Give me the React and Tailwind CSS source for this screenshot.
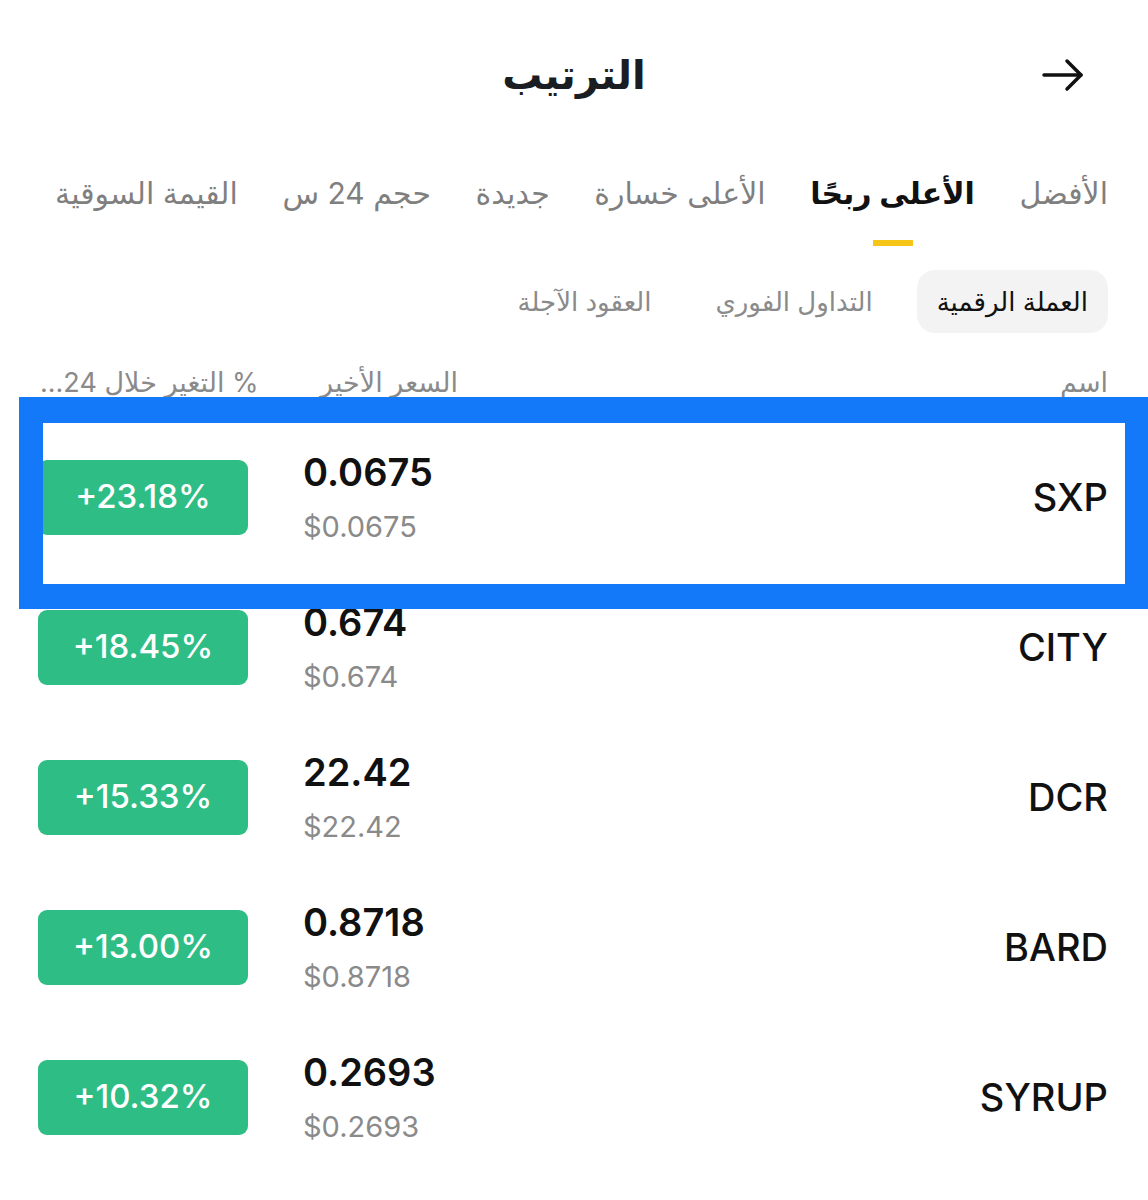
import React from "react";

const tabs = ["الأفضل", "الأعلى ربحًا", "الأعلى خسارة", "جديدة", "حجم 24 س", "القيمة السوقية"];
const markets = ["العملة الرقمية", "التداول الفوري", "العقود الآجلة"];

const rows = [
  { symbol: "SXP", price: "0.0675", usd: "$0.0675", change: "+23.18%" },
  { symbol: "CITY", price: "0.674", usd: "$0.674", change: "+18.45%" },
  { symbol: "DCR", price: "22.42", usd: "$22.42", change: "+15.33%" },
  { symbol: "BARD", price: "0.8718", usd: "$0.8718", change: "+13.00%" },
  { symbol: "SYRUP", price: "0.2693", usd: "$0.2693", change: "+10.32%" },
];

function BackArrow() {
  return (
    <svg width="42" height="34" viewBox="0 0 42 34" fill="none" stroke="#111" strokeWidth="3.5" strokeLinecap="round" strokeLinejoin="round">
      <path d="M2 17h37" />
      <path d="M25 3l14 14-14 14" />
    </svg>
  );
}

export default function App() {
  return (
    <div
      dir="rtl"
      className="relative w-[1148px] h-[1200px] bg-white overflow-hidden text-[#111]"
      style={{ fontFamily: "Inter, 'Noto Sans', 'DejaVu Sans', sans-serif" }}
    >
      {/* header */}
      <div className="grid grid-cols-[1fr_auto_1fr] items-center h-[150px] px-[40px]">
        <div className="flex justify-start pr-[24px]">
          <BackArrow />
        </div>
        <h1 className="text-[40px] font-bold leading-none text-[#1a1d21]">الترتيب</h1>
        <div />
      </div>

      {/* ranking tabs */}
      <div className="flex justify-between pr-[40px] pl-[55px] pt-[23px]">
        {tabs.map((t, i) => (
          <div key={t} className="flex flex-col items-center">
            <span
              className={`text-[30px] leading-[40px] whitespace-nowrap ${
                i === 1 ? "text-[#111] font-semibold" : "text-[#7f7f7f]"
              }`}
            >
              {t}
            </span>
            <span className={`mt-[27px] h-[6px] w-[40px] ${i === 1 ? "bg-[#f5c518]" : "bg-transparent"}`} />
          </div>
        ))}
      </div>

      {/* market segment */}
      <div className="flex gap-6 px-[40px] mt-[24px]">
        {markets.map((m, i) => (
          <div
            key={m}
            className={`h-[63px] px-5 flex items-center rounded-[18px] text-[26px] whitespace-nowrap ${
              i === 0 ? "bg-[#f3f3f3] text-[#111]" : "text-[#8a8a8a]"
            }`}
          >
            {m}
          </div>
        ))}
      </div>

      {/* column headers */}
      <div className="flex items-center h-[89px] pt-[9px] px-[40px] text-[27px] text-[#8a8a8a] leading-none">
        <span className="flex-1">اسم</span>
        <span className="whitespace-nowrap">السعر الأخير</span>
        <span className="w-[280px] text-left whitespace-nowrap">% التغير خلال 24...</span>
      </div>

      {/* rows */}
      <div dir="ltr">
        {rows.map((r) => (
          <div key={r.symbol} className="flex items-center h-[150px] px-[40px]">
            <div className="w-[210px] h-[75px] rounded-[9px] bg-[#2ebd85] flex items-center justify-center text-white text-[33px] font-medium -ml-[2px]">
              {r.change}
            </div>
            <div className="ml-[55px] flex flex-col">
              <span className="text-[38px] font-semibold leading-[44px] text-[#111]">{r.price}</span>
              <span className="text-[29px] leading-[36px] mt-[15px] text-[#8a8a8a]">{r.usd}</span>
            </div>
            <div className="flex-1 text-right text-[38px] font-medium text-[#111]">{r.symbol}</div>
          </div>
        ))}
      </div>

      {/* highlight overlay */}
      <div className="absolute left-[19px] right-0 top-[397px] h-[212px] border-t-[26px] border-b-[25px] border-l-[24px] border-r-[23px] border-[#1479f8] pointer-events-none" />
    </div>
  );
}
